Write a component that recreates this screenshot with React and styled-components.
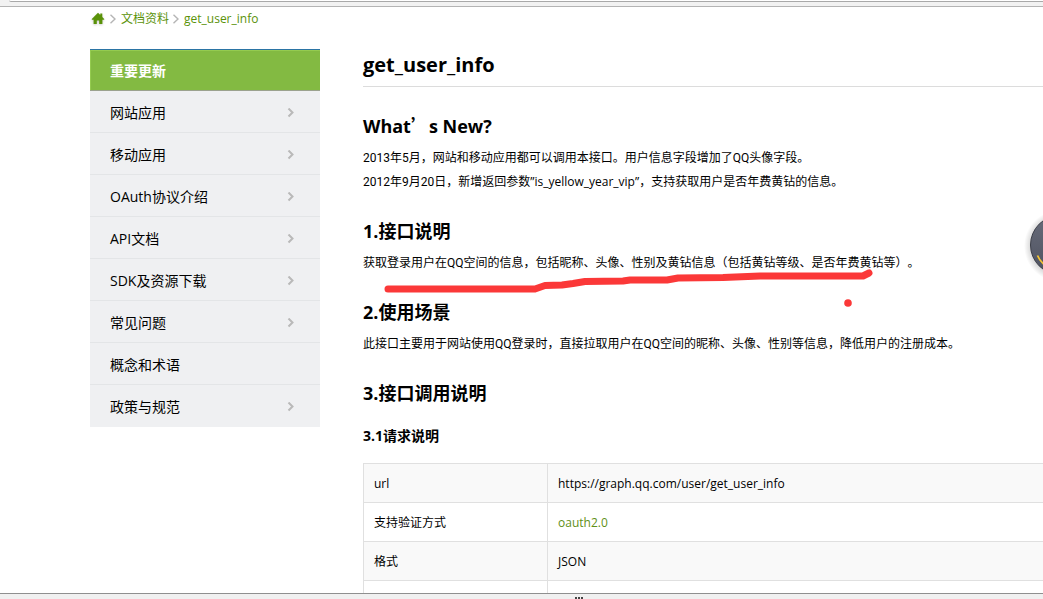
import React from "react";
import styled, { createGlobalStyle } from "styled-components";

const GlobalStyle = createGlobalStyle`
  * { box-sizing: border-box; }
  body {
    margin: 0;
    background: #fff;
    color: #000;
    font: 12px/24px Roboto, "Noto Sans CJK SC", sans-serif;
    text-spacing-trim: space-all;
  }
  a { color: inherit; text-decoration: none; }
`;

const wide = `"Open Sans", "Noto Sans CJK SC", sans-serif`;

const Window = styled.div`
  position: relative;
  display: flex;
  flex-direction: column;
  height: 100vh;
  overflow: hidden;
`;

const TopBar = styled.div`
  flex: none;
  height: 7px;
  padding-left: 9px;
  background: #f2f2f2;
  border-bottom: 1px solid #b4b4b4;
`;

const AddressEdge = styled.div`
  height: 2px;
  background: #fff;
  border-bottom: 1px solid #a9a9a9;
  border-bottom-left-radius: 2px;
`;

const Viewport = styled.div`
  flex: 1;
  min-height: 0;
  overflow: hidden;
  padding-left: 90px;
`;

const BottomBar = styled.div`
  flex: none;
  display: flex;
  justify-content: center;
  gap: 1px;
  height: 6px;
  padding: 3px 0 0 114px;
  background: #f0f0f0;
  border-top: 1px solid #8f8f8f;
`;

const Grip = styled.span`
  width: 2px;
  height: 2px;
  background: #444;
`;

const Breadcrumb = styled.nav`
  display: flex;
  align-items: center;
  height: 24px;
  color: #5a9209;
  font-family: ${wide};
`;

const HomeLink = styled.a`
  display: flex;
  width: 16px;
  height: 16px;
  filter: drop-shadow(0 1px 1px #ccc);
`;

const Separator = styled.svg`
  width: 6px;
  height: 10px;
  margin: 0 5px 0 4px;
`;

const Columns = styled.div`
  display: flex;
  gap: 43px;
  margin-top: 18px;
`;

const SideMenu = styled.nav`
  flex: none;
  width: 230px;
`;

const MenuLink = styled.a`
  display: flex;
  align-items: center;
  justify-content: space-between;
  height: 42px;
  padding: 2px 25px 0 20px;
  font: ${(p) => (p.$active ? "bold" : "normal")} 14px/24px ${wide};
  color: ${(p) => (p.$active ? "#fff" : "#000")};
  background: ${(p) => (p.$active ? "#83ba42" : "#eff0f2")};
  border-top: ${(p) => (p.$active ? "1px solid #2b74a4" : "0")};
  border-bottom: 1px solid ${(p) => (p.$active ? "#9ba28f" : "#e3e5e7")};
  box-shadow: ${(p) => (p.$active ? "inset 1px 1px #94cb50" : "none")};
  &:last-child { border-bottom-color: #eff0f2; }
`;

const Article = styled.main`
  flex: 1;
  min-width: 0;
  padding-top: 1px;
`;

const Title = styled.h1`
  margin: 0 0 23px;
  padding-bottom: 6px;
  border-bottom: 1px solid #dcdcdc;
  font: bold 20px/30px ${wide};
`;

const Heading = styled.h2`
  margin: 22px 0 5px;
  font: bold 18px/30px ${wide};
`;

const WideMark = styled.span`
  font-family: "Noto Sans CJK SC", sans-serif;
`;

const SubHeading = styled.h3`
  margin: 16px 0 15px;
  font: bold 14px/24px ${wide};
`;

const Text = styled.p`
  margin: 0;
  white-space: nowrap;
`;

const FieldName = styled.span`
  font-family: ${wide};
`;

const Table = styled.table`
  width: 100%;
  table-layout: fixed;
  border-collapse: separate;
  border-spacing: 0;
  border-top: 1px solid #e0e0e0;
  font-family: ${wide};
`;

const Row = styled.tr`
  height: 39px;
  background: #fff;
  &:nth-child(odd) { background: #f9f9f9; }
`;

const Cell = styled.td`
  padding: 2px 10px 0;
  border-left: 1px solid #e0e0e0;
  border-bottom: 1px solid #e0e0e0;
`;

const NameCell = styled(Cell).attrs({ as: "th", scope: "row" })`
  width: 184px;
  text-align: left;
  font-weight: normal;
`;

const GreenLink = styled.a`
  color: #5f8f17;
`;

const Ink = styled.svg`
  position: absolute;
  left: 0;
  top: 0;
  width: 1043px;
  height: 320px;
  pointer-events: none;
`;

const FloatBall = styled.svg`
  position: absolute;
  right: 0;
  top: 205px;
  width: 24px;
  height: 80px;
`;

const menu = [
  ["重要更新", false],
  ["网站应用", true],
  ["移动应用", true],
  ["OAuth协议介绍", true],
  ["API文档", true],
  ["SDK及资源下载", true],
  ["常见问题", true],
  ["概念和术语", false],
  ["政策与规范", true],
];

const Chevron = () => (
  <svg width="8" height="10" viewBox="0 0 8 10" fill="none" stroke="#b9b9b9" strokeWidth="2">
    <path d="M1.5 .5 L5.5 4.5 L1.5 8.5" />
  </svg>
);

const Crumb = () => (
  <Separator viewBox="0 0 6 10" fill="none" stroke="#b5b5b5" strokeWidth="1.4">
    <path d="M.5 .7 L5 5 L.5 9.3" />
  </Separator>
);

export default function App() {
  return (
    <Window>
      <GlobalStyle />
      <TopBar>
        <AddressEdge />
      </TopBar>
      <Viewport>
        <Breadcrumb>
          <HomeLink href="#" aria-label="Home">
            <svg width="16" height="16" viewBox="0 0 16 16" fill="#5a9209">
              <path d="M8 1.8 L10.3 4 V2.6 H12.3 V6 L14.2 8 V8.7 H12.4 V13 H9.2 V9.5 H6.8 V13 H3.6 V8.7 H1.8 V8 Z" />
            </svg>
          </HomeLink>
          <Crumb />
          <a href="#">文档资料</a>
          <Crumb />
          <a href="#">get_user_info</a>
        </Breadcrumb>
        <Columns>
          <SideMenu>
            {menu.map(([label, arrow], i) => (
              <MenuLink key={label} href="#" $active={i === 0}>
                {label}
                {arrow && <Chevron />}
              </MenuLink>
            ))}
          </SideMenu>
          <Article>
            <Title>get_user_info</Title>
            <Heading>
              What<WideMark>’</WideMark>s New?
            </Heading>
            <Text>2013年5月，网站和移动应用都可以调用本接口。用户信息字段增加了QQ头像字段。</Text>
            <Text>
              2012年9月20日，新增返回参数<FieldName>”is_yellow_year_vip”</FieldName>，支持获取用户是否年费黄钻的信息。
            </Text>
            <Heading>1.接口说明</Heading>
            <Text>获取登录用户在QQ空间的信息，包括昵称、头像、性别及黄钻信息（包括黄钻等级、是否年费黄钻等）。</Text>
            <Heading>2.使用场景</Heading>
            <Text>此接口主要用于网站使用QQ登录时，直接拉取用户在QQ空间的昵称、头像、性别等信息，降低用户的注册成本。</Text>
            <Heading>3.接口调用说明</Heading>
            <SubHeading>3.1请求说明</SubHeading>
            <Table>
              <tbody>
                <Row>
                  <NameCell>url</NameCell>
                  <Cell>https://graph.qq.com/user/get_user_info</Cell>
                </Row>
                <Row>
                  <NameCell>支持验证方式</NameCell>
                  <Cell>
                    <GreenLink href="#">oauth2.0</GreenLink>
                  </Cell>
                </Row>
                <Row>
                  <NameCell>格式</NameCell>
                  <Cell>JSON</Cell>
                </Row>
                <Row>
                  <NameCell />
                  <Cell />
                </Row>
              </tbody>
            </Table>
          </Article>
        </Columns>
      </Viewport>
      <BottomBar>
        <Grip />
        <Grip />
        <Grip />
      </BottomBar>
      <Ink viewBox="0 0 1043 320">
        <path
          d="M388 289 H535 L545 285.5 L562 285 L573 283.5 L585 281.5 L623 281 L630 280 H667 L678 278 L723 277.5 L760 276 H863 L869 273"
          fill="none"
          stroke="#fb3838"
          strokeWidth="7"
          strokeLinecap="round"
          strokeLinejoin="round"
        />
        <circle cx="848" cy="303" r="3.8" fill="#fb3838" />
      </Ink>
      <FloatBall viewBox="0 0 24 80">
        <defs>
          <radialGradient id="halo" gradientUnits="userSpaceOnUse" cx="41" cy="41" r="36">
            <stop offset="0.8" stopColor="#000" stopOpacity="0.16" />
            <stop offset="1" stopColor="#000" stopOpacity="0" />
          </radialGradient>
          <linearGradient id="ball" x1="0" y1="0" x2="0" y2="1">
            <stop offset="0" stopColor="#676b79" />
            <stop offset="1" stopColor="#4f5361" />
          </linearGradient>
        </defs>
        <circle cx="41" cy="41" r="36" fill="url(#halo)" />
        <circle cx="41" cy="40" r="29.5" fill="url(#ball)" stroke="#3b3e48" />
        <path d="M18.5 50.5 Q20.5 55.5 25 59.5" fill="none" stroke="#f5c431" strokeWidth="1.8" />
      </FloatBall>
    </Window>
  );
}
